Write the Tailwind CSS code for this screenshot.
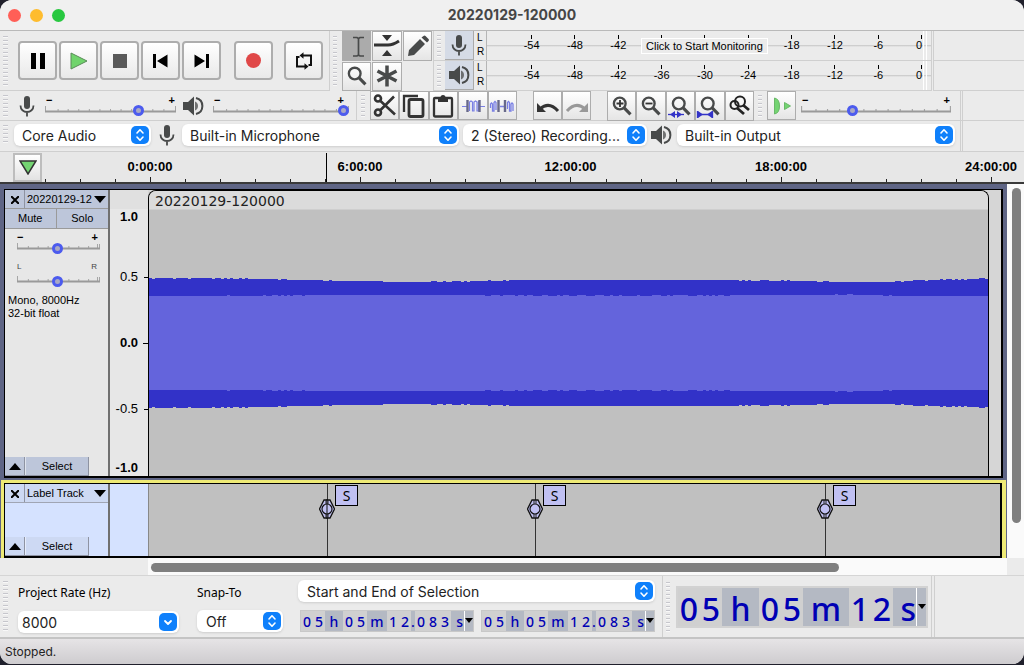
<!DOCTYPE html>
<html lang="en">
<head>
<meta charset="utf-8">
<title>20220129-120000</title>
<script src="https://cdn.jsdelivr.net/npm/@tailwindcss/browser@4"></script>
</head>
<body class="bg-[#20202c] font-['Liberation_Sans',sans-serif] text-black">
<svg width="0" height="0" class="absolute" aria-hidden="true">
  <defs>
    <symbol id="mic" viewBox="0 0 16 22"><rect x="5" y="1" width="6" height="13" rx="3" fill="#484a4a"/><path d="M1.500 10.500c0 4 3 6.500 6.500 6.500s6.500-2.500 6.500-6.500M8 17v4.500" fill="none" stroke="#484a4a" stroke-width="1.800"/></symbol>
    <symbol id="speaker" viewBox="0 0 21 20"><path d="M0 6h5l6-5.500v19L5 14H0z" fill="#484a4a"/><path d="M12 5.500c4 1 4 8 0 9z" fill="#484a4a" opacity=".75"/><path d="M13 2c8.500 2 8.500 14 0 16" fill="none" stroke="#484a4a" stroke-width="2"/></symbol>
    <symbol id="updown" viewBox="0 0 18 18"><rect width="18" height="18" rx="5" fill="#0f80fb"/><path d="M6 7l3-3.200L12 7M6 11l3 3.200L12 11" fill="none" stroke="#fff" stroke-width="1.600" stroke-linecap="round" stroke-linejoin="round"/></symbol>
    <symbol id="down" viewBox="0 0 18 18"><rect width="18" height="18" rx="5" fill="#0f80fb"/><path d="M6 8l3 3 3-3" fill="none" stroke="#fff" stroke-width="1.800" stroke-linecap="round" stroke-linejoin="round"/></symbol>
    <symbol id="lens" viewBox="0 0 28 28"><circle cx="12" cy="11.500" r="6" fill="none" stroke="#484a4a" stroke-width="2.400"/><path d="M16.500 16l6.500 6.500" stroke="#484a4a" stroke-width="3.200"/></symbol>
    <symbol id="scale" viewBox="0 0 130 8" preserveAspectRatio="none"><path d="M.5 7V1M13 7V4M23 7V4M33.500 7V4M44 7V4M54.500 7V4M65 7V4M75.500 7V4M86 7V4M96.500 7V4M107 7V4M118 7V4M129.500 7V1" stroke="#a4a4a4" fill="none"/><path d="M0 6.500h130" stroke="#9a9a9a" stroke-width="2"/></symbol>
    <symbol id="scaleShort" viewBox="0 0 84 8" preserveAspectRatio="none"><path d="M.5 7V1M11.500 7V4M21.500 7V4M31.500 7V4M41.500 7V4M52.500 7V4M62.500 7V4M72.500 7V4M81.500 7V2M83.500 7V2" stroke="#a4a4a4" fill="none"/><path d="M0 6.500h84" stroke="#9a9a9a" stroke-width="2"/></symbol>
    <symbol id="handle" viewBox="0 0 16 20"><path d="M5 1h6l4.500 9L11 19H5L.5 10z" fill="#c0c0f2" stroke="#111" stroke-width="1.300"/><path d="M7 1v4M9 1v4M7 15v4M9 15v4" stroke="#222"/><circle cx="8" cy="10" r="5" fill="#c0c0f2" stroke="#111" stroke-width="1.200"/></symbol>
  </defs>
</svg>

<main class="flex min-h-[664px] flex-col overflow-hidden rounded-xl bg-[#ebebeb]">
  <header class="grid h-[31px] grid-cols-[1fr_auto_1fr] items-center border-b border-[#b9b9b9] bg-[#f0f0f0] px-2">
    <div class="flex gap-[9px]">
      <button aria-label="Close" class="size-[13px] rounded-full bg-[#ff5f57]"></button>
      <button aria-label="Minimise" class="size-[13px] rounded-full bg-[#febc2e]"></button>
      <button aria-label="Zoom window" class="size-[13px] rounded-full bg-[#28c840]"></button>
    </div>
    <h1 class="pb-[2px] font-['Inter',sans-serif] text-[14px] font-bold text-[#464646]">20220129-120000</h1>
  </header>

  <!-- Transport, tools and meters -->
  <div class="flex h-[60px] shrink-0">
    <section aria-label="Transport" class="flex w-[330px] shrink-0 items-center border-r border-b border-[#cfcfcf]">
      <span class="mr-[10px] ml-[3px] h-[50px] w-[5px] bg-[repeating-linear-gradient(#c6c6cc_0_1px,#f8f8f8_1px_2px,transparent_2px_4px)]"></span>
      <div class="flex gap-[2px]">
        <button aria-label="Pause" class="flex size-[39px] items-center justify-center rounded-sm border-2 border-[#adadad] bg-linear-to-b from-white to-[#e9e9e9]"><svg width="14" height="16"><path d="M0 0h5v16H0zM9 0h5v16H9z"/></svg></button>
        <button aria-label="Play" class="flex size-[39px] items-center justify-center rounded-sm border-2 border-[#adadad] bg-linear-to-b from-white to-[#e9e9e9]"><svg width="18" height="18"><path d="M1 1v16l16-8z" fill="#70d46c" stroke="#5a8a58"/></svg></button>
        <button aria-label="Stop" class="flex size-[39px] items-center justify-center rounded-sm border-2 border-[#adadad] bg-linear-to-b from-white to-[#e9e9e9]"><svg width="14" height="14"><path d="M0 0h14v14H0z" fill="#5a5a5a"/></svg></button>
        <button aria-label="Skip to start" class="flex size-[39px] items-center justify-center rounded-sm border-2 border-[#adadad] bg-linear-to-b from-white to-[#e9e9e9]"><svg width="15" height="14"><path d="M0 0h3v14H0zM14.500 .5v13L4 7z"/></svg></button>
        <button aria-label="Skip to end" class="flex size-[39px] items-center justify-center rounded-sm border-2 border-[#adadad] bg-linear-to-b from-white to-[#e9e9e9]"><svg width="15" height="14"><path d="M12 0h3v14h-3zM.5 .5v13L11 7z"/></svg></button>
      </div>
      <button aria-label="Record" class="ml-[13px] flex size-[39px] items-center justify-center rounded-sm border-2 border-[#adadad] bg-linear-to-b from-white to-[#e9e9e9]"><span class="size-[15px] rounded-full bg-[#e04848]"></span></button>
      <button aria-label="Loop" class="ml-[11px] flex size-[39px] items-center justify-center rounded-sm border-2 border-[#adadad] bg-linear-to-b from-white to-[#e9e9e9]"><svg width="18" height="18" fill="none" stroke="#111" stroke-width="2"><path d="M4.500 5H2v9.500h8M13.500 13H16V3.500H8"/><path d="M8.500 .2v6.600L4.500 3.500zM9.500 11.200v6.600l4-3.300z" fill="#111" stroke="none"/></svg></button>
    </section>
    <section aria-label="Tools" class="flex w-[103px] shrink-0 pr-px">
      <span class="mt-[5px] mr-[5px] ml-[3px] h-[50px] w-[4px] bg-[repeating-linear-gradient(#c6c6cc_0_1px,#f8f8f8_1px_2px,transparent_2px_4px)]"></span>
      <div class="grid flex-1 grid-cols-3 grid-rows-2 gap-px">
        <button aria-label="Selection tool" class="flex items-center justify-center bg-[#ababab]"><svg width="28" height="28" fill="none" stroke="#484a4a" stroke-width="2"><path d="M15.500 6v18M10 5.500h4l1.500 1 1.500-1h4M10 24h4l1.500-1 1.500 1h4" stroke-width="1.700"/></svg></button>
        <button aria-label="Envelope tool" class="flex items-center justify-center border border-[#adadad] bg-linear-to-b from-white to-[#e5e5e5]"><svg width="28" height="28"><path d="M9 3h10l-5 6zM9 24h10l-5-6z" fill="#333"/><path d="M1 13h14q5 0 11-4" fill="none" stroke="#333" stroke-width="3"/></svg></button>
        <button aria-label="Draw tool" class="flex items-center justify-center border border-[#adadad] bg-linear-to-b from-white to-[#e5e5e5]"><svg width="28" height="28" fill="#484a4a"><path d="M4 24l1-6L16 7l5 5-11 11zM17.500 5.500l2-1.500q1-1 2 0l3 3q1 1 0 2L23 10.500z"/></svg></button>
        <button aria-label="Zoom tool" class="flex items-center justify-center border border-[#adadad] bg-linear-to-b from-white to-[#e5e5e5]"><svg width="28" height="28"><use href="#lens"/></svg></button>
        <button aria-label="Multi-tool" class="flex items-center justify-center border border-[#adadad] bg-linear-to-b from-white to-[#e5e5e5]"><svg width="28" height="28"><path d="M14 3.500v21M4.500 9l19 10M23.500 9l-19 10" stroke="#484a4a" stroke-width="3.500"/></svg></button>
      </div>
    </section>
    <section aria-label="Meters" class="flex w-[499px] shrink-0 flex-col border-r border-l border-[#cfcfcf]">
      <div class="flex h-[30px] border-b border-[#cfcfcf]">
        <span class="mt-[4px] mr-[4px] ml-[3px] h-[24px] w-[4px] bg-[repeating-linear-gradient(#c6c6cc_0_1px,#f8f8f8_1px_2px,transparent_2px_4px)]"></span>
        <button aria-label="Record meter" class="flex w-[29px] items-center justify-center border-r border-b border-[#aaa] bg-[#d5dbe6]"><svg width="16" height="22"><use href="#mic"/></svg></button>
        <div class="w-[12px] pl-[3px] text-[10px] leading-[14px]"><p>L</p><p>R</p></div>
        <div class="relative flex-1 border-l border-[#b5b5b5] bg-linear-to-b from-transparent from-[14px] via-[#c4c4c4] via-[14px] to-transparent to-[16px]">
          <div class="flex pt-[4px] pr-[31px] pl-[23px] text-[11px] leading-[12px]">
            <span class="flex flex-1 flex-col items-center"><i class="h-[4px] w-px bg-black"></i>-54</span><span class="flex flex-1 flex-col items-center"><i class="h-[4px] w-px bg-black"></i>-48</span><span class="flex flex-1 flex-col items-center"><i class="h-[4px] w-px bg-black"></i>-42</span><span class="flex flex-1 flex-col items-center"><i class="h-[4px] w-px bg-black"></i>&nbsp;</span><span class="flex flex-1 flex-col items-center"><i class="h-[4px] w-px bg-black"></i>&nbsp;</span><span class="flex flex-1 flex-col items-center"><i class="h-[4px] w-px bg-black"></i>&nbsp;</span><span class="flex flex-1 flex-col items-center"><i class="h-[4px] w-px bg-black"></i>-18</span><span class="flex flex-1 flex-col items-center"><i class="h-[4px] w-px bg-black"></i>-12</span><span class="flex flex-1 flex-col items-center"><i class="h-[4px] w-px bg-black"></i>-6</span>
          </div>
          <span class="absolute top-[4px] right-[9px] flex flex-col items-end text-[11px] leading-[12px]"><i class="h-[4px] w-px bg-black"></i>0</span>
          <button class="absolute top-[7px] left-[154px] h-[16px] border border-white bg-[#ebebeb] px-[4px] text-[11px] leading-[13px] whitespace-nowrap">Click to Start Monitoring</button>
          <i class="absolute top-0 right-[4px] h-[29px] w-[4px] border-x border-white"></i>
        </div>
      </div>
      <div class="flex h-[30px] border-b border-[#cfcfcf]">
        <span class="mt-[4px] mr-[4px] ml-[3px] h-[24px] w-[4px] bg-[repeating-linear-gradient(#c6c6cc_0_1px,#f8f8f8_1px_2px,transparent_2px_4px)]"></span>
        <button aria-label="Playback meter" class="flex w-[29px] items-center justify-center border-r border-b border-[#aaa] bg-[#d5dbe6]"><svg width="21" height="20"><use href="#speaker"/></svg></button>
        <div class="w-[12px] pl-[3px] text-[10px] leading-[14px]"><p>L</p><p>R</p></div>
        <div class="relative flex-1 border-l border-[#b5b5b5] bg-linear-to-b from-transparent from-[14px] via-[#c4c4c4] via-[14px] to-transparent to-[16px]">
          <div class="flex pt-[4px] pr-[31px] pl-[23px] text-[11px] leading-[12px]">
            <span class="flex flex-1 flex-col items-center"><i class="h-[4px] w-px bg-black"></i>-54</span><span class="flex flex-1 flex-col items-center"><i class="h-[4px] w-px bg-black"></i>-48</span><span class="flex flex-1 flex-col items-center"><i class="h-[4px] w-px bg-black"></i>-42</span><span class="flex flex-1 flex-col items-center"><i class="h-[4px] w-px bg-black"></i>-36</span><span class="flex flex-1 flex-col items-center"><i class="h-[4px] w-px bg-black"></i>-30</span><span class="flex flex-1 flex-col items-center"><i class="h-[4px] w-px bg-black"></i>-24</span><span class="flex flex-1 flex-col items-center"><i class="h-[4px] w-px bg-black"></i>-18</span><span class="flex flex-1 flex-col items-center"><i class="h-[4px] w-px bg-black"></i>-12</span><span class="flex flex-1 flex-col items-center"><i class="h-[4px] w-px bg-black"></i>-6</span>
          </div>
          <span class="absolute top-[4px] right-[9px] flex flex-col items-end text-[11px] leading-[12px]"><i class="h-[4px] w-px bg-black"></i>0</span>
          <i class="absolute top-0 right-[4px] h-[29px] w-[4px] border-x border-white"></i>
        </div>
      </div>
    </section>
    <div class="ml-px flex-1 border-b border-l border-[#cfcfcf]"><div class="h-[30px] border-b border-[#cfcfcf]"></div></div>
  </div>

  <!-- Mixer, edit and play-at-speed -->
  <div class="flex h-[30px] shrink-0 border-b border-[#cfcfcf]">
    <section aria-label="Mixer" class="flex w-[357px] shrink-0 items-center border-r border-[#cfcfcf]">
      <span class="mr-[11px] ml-[3px] h-[22px] w-[5px] bg-[repeating-linear-gradient(#c6c6cc_0_1px,#f8f8f8_1px_2px,transparent_2px_4px)]"></span>
      <svg width="16" height="22"><use href="#mic"/></svg>
      <div class="ml-[10px] grid w-[131px] grid-rows-[10px_12px]">
        <div class="flex justify-between px-[1px] text-[11px] leading-[10px] font-bold"><span>−</span><span>+</span></div>
        <svg class="[grid-area:2/1] h-[8px] w-full" preserveAspectRatio="none"><use href="#scale"/></svg>
        <input type="range" aria-label="Recording volume" value="73" class="[grid-area:2/1] h-[12px] w-full appearance-none bg-transparent [&::-webkit-slider-thumb]:size-[11px] [&::-webkit-slider-thumb]:appearance-none [&::-webkit-slider-thumb]:rounded-full [&::-webkit-slider-thumb]:border-[3px] [&::-webkit-slider-thumb]:border-[#4c5bee] [&::-webkit-slider-thumb]:bg-[#a9a9c4]">
      </div>
      <svg class="ml-[7px]" width="21" height="20"><use href="#speaker"/></svg>
      <div class="ml-[9px] grid w-[136px] grid-rows-[10px_12px]">
        <div class="flex justify-between px-[1px] pr-[5px] text-[11px] leading-[10px] font-bold"><span>−</span><span>+</span></div>
        <svg class="[grid-area:2/1] h-[8px] w-full" preserveAspectRatio="none"><use href="#scale"/></svg>
        <input type="range" aria-label="Playback volume" value="100" class="[grid-area:2/1] h-[12px] w-full appearance-none bg-transparent [&::-webkit-slider-thumb]:size-[11px] [&::-webkit-slider-thumb]:appearance-none [&::-webkit-slider-thumb]:rounded-full [&::-webkit-slider-thumb]:border-[3px] [&::-webkit-slider-thumb]:border-[#4c5bee] [&::-webkit-slider-thumb]:bg-[#a9a9c4]">
      </div>
    </section>
    <section aria-label="Edit" class="flex w-[397px] shrink-0 items-center">
      <span class="mr-[5px] ml-[4px] h-[22px] w-[4px] bg-[repeating-linear-gradient(#c6c6cc_0_1px,#f8f8f8_1px_2px,transparent_2px_4px)]"></span>
      <div class="grid h-[29px] w-[147px] grid-cols-5">
        <button aria-label="Cut" class="flex items-center justify-center border border-[#adadad] bg-linear-to-b from-white to-[#e5e5e5]"><svg width="26" height="26" fill="none" stroke="#333" stroke-width="2.600"><circle cx="6" cy="5.500" r="3"/><circle cx="6" cy="19.500" r="3"/><path d="M8.500 8L23 21.500M8.500 17L22 3.500"/></svg></button>
        <button aria-label="Copy" class="flex items-center justify-center border border-[#adadad] bg-linear-to-b from-white to-[#e5e5e5]"><svg width="26" height="26" fill="none" stroke="#333" stroke-width="2.300"><path d="M3 19V3h14"/><rect x="8" y="6.500" width="14" height="17" rx="1.500" stroke-width="2.800"/></svg></button>
        <button aria-label="Paste" class="flex items-center justify-center border border-[#adadad] bg-linear-to-b from-white to-[#e5e5e5]"><svg width="26" height="26"><rect x="4" y="5" width="18" height="18.500" rx="1" fill="none" stroke="#333" stroke-width="2.300"/><path d="M8 9V4.500h2.500a2.500 2.500 0 015 0H18V9z" fill="#333"/></svg></button>
        <button aria-label="Trim audio" class="flex items-center justify-center border border-[#adadad] bg-linear-to-b from-white to-[#e5e5e5]"><svg width="26" height="26" fill="none"><path d="M2 13.500h5M20 13.500h5M9.500 18V9l1.500-1 1.500 1v9h1.500V9l1.500-1L17 9v9h1.500V8" stroke="#7a80e4" stroke-width="1.200"/><path d="M7.500 7v12M19.500 7v12" stroke="#68698a" stroke-width="2.400"/></svg></button>
        <button aria-label="Silence audio" class="flex items-center justify-center border border-[#adadad] bg-linear-to-b from-white to-[#e5e5e5]"><svg width="26" height="26" fill="none"><path d="M1.500 15v-4l1-1 1 1v7H5V9.500L6 8.500l1 1V17M11 13.500h5M18.500 16V9.500l1-1 1 1V18H22v-7l1-1 1 1v7" stroke="#7a80e4" stroke-width="1.300"/><path d="M9.500 7v12M16 7v12" stroke="#68698a" stroke-width="2.400"/></svg></button>
      </div>
      <div class="ml-[16px] grid h-[29px] w-[58px] grid-cols-2">
        <button aria-label="Undo" class="flex items-center justify-center border border-[#adadad] bg-linear-to-b from-white to-[#e5e5e5]"><svg width="26" height="26"><path d="M2 10v9h9z" fill="#333"/><path d="M5 16q9-8 18 2" fill="none" stroke="#333" stroke-width="3"/></svg></button>
        <button aria-label="Redo" class="flex items-center justify-center border border-[#adadad] bg-linear-to-b from-white to-[#e5e5e5]"><svg width="26" height="26"><path d="M24 10v9h-9z" fill="#999"/><path d="M21 16q-9-8-18 2" fill="none" stroke="#999" stroke-width="3"/></svg></button>
      </div>
      <div class="ml-[16px] grid h-[29px] w-[147px] grid-cols-5">
        <button aria-label="Zoom in" class="flex items-center justify-center border border-[#adadad] bg-linear-to-b from-white to-[#e5e5e5]"><svg width="28" height="28"><use href="#lens"/><path d="M8.500 11.500h7M12 8v7" stroke="#333" stroke-width="1.800"/></svg></button>
        <button aria-label="Zoom out" class="flex items-center justify-center border border-[#adadad] bg-linear-to-b from-white to-[#e5e5e5]"><svg width="28" height="28"><use href="#lens"/><path d="M8.500 11.500h7" stroke="#333" stroke-width="1.800"/></svg></button>
        <button aria-label="Fit selection" class="flex items-center justify-center border border-[#adadad] bg-linear-to-b from-white to-[#e5e5e5]"><svg width="28" height="28"><use href="#lens"/><path d="M1 22.500h16" stroke="#3333c8" stroke-width="1.300"/><path d="M8 19v7l-5-3.500zM10 19v7l5-3.500z" fill="#3333c8"/></svg></button>
        <button aria-label="Fit project" class="flex items-center justify-center border border-[#adadad] bg-linear-to-b from-white to-[#e5e5e5]"><svg width="28" height="28"><use href="#lens"/><path d="M1.500 22.500h15M1.500 19v7M16.500 19v7" stroke="#3333c8" stroke-width="1.300"/><path d="M2 19v7l5-3.500zM16 19v7l-5-3.500z" fill="#3333c8"/></svg></button>
        <button aria-label="Zoom toggle" class="flex items-center justify-center border border-[#adadad] bg-linear-to-b from-white to-[#e5e5e5]"><svg width="28" height="28" fill="none" stroke="#222" stroke-width="2"><circle cx="8.500" cy="13" r="4"/><circle cx="14" cy="9.500" r="5"/><path d="M11 16l7 6M17 13l6 5" stroke-width="2.800"/></svg></button>
      </div>
    </section>
    <section aria-label="Play at speed" class="flex w-[207px] shrink-0 items-center border-r border-[#cfcfcf]">
      <span class="mr-[5px] ml-[4px] h-[22px] w-[4px] bg-[repeating-linear-gradient(#c6c6cc_0_1px,#f8f8f8_1px_2px,transparent_2px_4px)]"></span>
      <button aria-label="Play at speed" class="flex size-[29px] items-center justify-center border border-[#adadad] bg-linear-to-b from-white to-[#e5e5e5]"><svg width="26" height="26" fill="#74d472" stroke="#6ab868"><path d="M5.500 5v16q5-1 5-8t-5-8zM15.500 9.500v7l6-3.500z"/></svg></button>
      <div class="ml-[5px] grid w-[150px] grid-rows-[10px_12px]">
        <div class="flex justify-between px-[1px] text-[11px] leading-[10px] font-bold"><span>−</span><span>+</span></div>
        <svg class="[grid-area:2/1] h-[8px] w-full" preserveAspectRatio="none"><use href="#scale"/></svg>
        <input type="range" aria-label="Playback speed" value="33" class="[grid-area:2/1] h-[12px] w-full appearance-none bg-transparent [&::-webkit-slider-thumb]:size-[11px] [&::-webkit-slider-thumb]:appearance-none [&::-webkit-slider-thumb]:rounded-full [&::-webkit-slider-thumb]:border-[3px] [&::-webkit-slider-thumb]:border-[#4c5bee] [&::-webkit-slider-thumb]:bg-[#a9a9c4]">
      </div>
    </section>
    <div class="ml-px flex-1 border-l border-[#cfcfcf]"></div>
  </div>

  <!-- Devices -->
  <div class="flex h-[31px] shrink-0 border-b border-[#cfcfcf] font-['Inter',sans-serif] text-[14px] text-[#222]">
    <section aria-label="Device" class="flex w-[961px] shrink-0 items-center border-r border-[#cfcfcf] pb-[2px]">
      <span class="mr-[6px] ml-[3px] h-[20px] w-[5px] bg-[repeating-linear-gradient(#c6c6cc_0_1px,#f8f8f8_1px_2px,transparent_2px_4px)]"></span>
      <div class="relative w-[137px]"><select aria-label="Audio host" class="h-[22px] w-full appearance-none rounded-md bg-white pl-[8px] shadow-sm"><option>Core Audio</option></select><svg class="pointer-events-none absolute top-[2px] right-[2px]" width="18" height="18"><use href="#updown"/></svg></div>
      <svg class="mr-[7px] ml-[8px]" width="16" height="22"><use href="#mic"/></svg>
      <div class="relative w-[277px]"><select aria-label="Recording device" class="h-[22px] w-full appearance-none rounded-md bg-white pl-[8px] shadow-sm"><option>Built-in Microphone</option></select><svg class="pointer-events-none absolute top-[2px] right-[2px]" width="18" height="18"><use href="#updown"/></svg></div>
      <div class="relative ml-[4px] w-[184px]"><select aria-label="Recording channels" class="h-[22px] w-full appearance-none rounded-md bg-white pl-[8px] shadow-sm"><option>2 (Stereo) Recording...</option></select><svg class="pointer-events-none absolute top-[2px] right-[2px]" width="18" height="18"><use href="#updown"/></svg></div>
      <svg class="mr-[5px] ml-[4px]" width="21" height="20"><use href="#speaker"/></svg>
      <div class="relative w-[278px]"><select aria-label="Playback device" class="h-[22px] w-full appearance-none rounded-md bg-white pl-[8px] shadow-sm"><option>Built-in Output</option></select><svg class="pointer-events-none absolute top-[2px] right-[2px]" width="18" height="18"><use href="#updown"/></svg></div>
    </section>
    <div class="ml-px flex-1 border-l border-[#cfcfcf]"></div>
  </div>

  <!-- Timeline -->
  <div class="flex h-[32px] shrink-0 border-b-2 border-[#3a3a3a] bg-[#e7e7e7]">
    <div class="w-[45px] shrink-0 pt-px pl-[13px]"><button aria-label="Pinned play head" class="flex size-[29px] items-center justify-center border-2 border-[#bdbdbd] bg-linear-to-b from-white to-[#e2e2e2]"><svg width="18" height="15"><path d="M1 1h16L9 14z" fill="#74d472" stroke="#333" stroke-width="1.500"/></svg></button></div>
    <div class="grid min-w-0 flex-1 overflow-hidden">
      <div class="[grid-area:1/1] flex pt-[7px] text-[13px] leading-[16px] font-bold">
        <span class="w-[210px] shrink-0 text-center">0:00:00</span><span class="w-[210px] shrink-0 text-center">6:00:00</span><span class="w-[211px] shrink-0 text-center">12:00:00</span><span class="w-[210px] shrink-0 text-center">18:00:00</span><span class="w-[210px] shrink-0 text-center">24:00:00</span>
      </div>
      <svg class="[grid-area:1/1] w-full" height="30" stroke="#222"><path id="rulerTicks"/><path d="M281.500 1v29" stroke="#000"/></svg>
    </div>
  </div>

  <!-- Tracks -->
  <div class="flex shrink-0">
    <div class="min-w-0 flex-1 bg-[#5f6585]">
      <section aria-label="Audio track" class="mx-[4px] mt-[5px] flex h-[289px] border border-r-2 border-b-2 border-black bg-[#e7e7e7]">
        <div class="flex w-[105px] shrink-0 flex-col border-r-2 border-[#707070]">
          <div class="flex h-[19px] border-b border-[#9a9a9a] bg-[#bdc6da]">
            <button aria-label="Close track" class="flex w-[20px] items-center justify-center border-r border-[#8e93a2] pt-px"><svg width="8" height="8" stroke="#000" stroke-width="2"><path d="M0 0l8 8M8 0L0 8"/></svg></button>
            <button class="flex flex-1 items-center gap-[2px] pl-[2px] text-[11px] whitespace-nowrap">20220129-12<svg width="12" height="7"><path d="M0 0h12L6 7z"/></svg></button>
          </div>
          <div class="grid h-[20px] grid-cols-2 border-b border-[#9a9a9a] bg-[#bdc6da] text-[11px]"><button class="border-r border-[#9a9a9a]">Mute</button><button>Solo</button></div>
          <div class="mt-[4px] ml-[12px] grid w-[83px] grid-rows-[9px_12px]">
            <div class="flex justify-between pr-[2px] text-[11px] leading-[9px] font-bold"><span>−</span><span>+</span></div>
            <svg class="[grid-area:2/1] h-[8px] w-full"><use href="#scaleShort"/></svg>
            <input type="range" aria-label="Gain" value="48" class="[grid-area:2/1] h-[12px] w-full appearance-none bg-transparent [&::-webkit-slider-thumb]:size-[11px] [&::-webkit-slider-thumb]:appearance-none [&::-webkit-slider-thumb]:rounded-full [&::-webkit-slider-thumb]:border-[3px] [&::-webkit-slider-thumb]:border-[#4c5bee] [&::-webkit-slider-thumb]:bg-[#a9a9c4]">
          </div>
          <div class="mt-[8px] ml-[12px] grid w-[83px] grid-rows-[13px_12px]">
            <div class="flex justify-between pr-[3px] text-[8px] leading-[10px] text-[#444]"><span>L</span><span>R</span></div>
            <svg class="[grid-area:2/1] h-[8px] w-full"><use href="#scaleShort"/></svg>
            <input type="range" aria-label="Pan" value="48" class="[grid-area:2/1] h-[12px] w-full appearance-none bg-transparent [&::-webkit-slider-thumb]:size-[11px] [&::-webkit-slider-thumb]:appearance-none [&::-webkit-slider-thumb]:rounded-full [&::-webkit-slider-thumb]:border-[3px] [&::-webkit-slider-thumb]:border-[#4c5bee] [&::-webkit-slider-thumb]:bg-[#a9a9c4]">
          </div>
          <p class="mt-[7px] pl-[3px] text-[11px] leading-[13px]">Mono, 8000Hz<br>32-bit float</p>
          <div class="mt-auto flex h-[19px] w-[84px] border-r border-b border-[#8e93a2] bg-[#bdc6da] text-[11px]">
            <button aria-label="Collapse track" class="flex w-[20px] items-center justify-center border-r border-[#8e93a2]"><svg width="12" height="7"><path d="M0 7h12L6 0z"/></svg></button>
            <button class="flex-1 border-l border-[#dfe4ee]">Select</button>
          </div>
        </div>
        <div class="flex w-[38px] shrink-0 flex-col border-t-[19px] border-[#e0e0e0] text-right text-[13px] leading-[16px]">
          <b class="pr-[10px]">1.0</b>
          <span class="mt-[44px] flex items-center justify-end gap-[6px]">0.5<i class="h-px w-[4px] bg-black"></i></span>
          <span class="mt-[50px] flex items-center justify-end gap-[5px] font-bold">0.0<i class="h-px w-[5px] bg-black"></i></span>
          <span class="mt-[50px] flex items-center justify-end gap-[6px]">-0.5<i class="h-px w-[4px] bg-black"></i></span>
          <b class="mt-[43px] pr-[10px]">-1.0</b>
        </div>
        <div class="flex min-w-0 flex-1 bg-[#d6d6d6]">
          <div class="flex min-w-0 flex-1 flex-col overflow-hidden rounded-t-lg border border-b-0 border-black bg-[#c0c0c0]">
            <h2 class="h-[19px] border-b border-[#cecece] bg-[#dbdbdb] pl-[6px] font-['DejaVu_Sans',sans-serif] text-[14px] leading-[21px] text-[#222]">20220129-120000</h2>
            <svg class="w-full flex-1" viewBox="0 0 840 266" preserveAspectRatio="none" shape-rendering="crispEdges"><path id="waveOuter" fill="#3232c8"/><path id="waveInner" fill="#6464dc"/></svg>
          </div>
          <div class="w-[12px]"></div>
        </div>
      </section>
      <div class="mx-px mt-[2px] border-2 border-b-0 border-[#eeea76] bg-[#eeea76] pt-px pr-[2px]">
        <section aria-label="Label track" class="ml-px flex h-[75px] border border-r-2 border-b-2 border-black bg-[#c0c0c0]">
          <div class="flex w-[105px] shrink-0 flex-col border-r-2 border-[#707070] bg-[#d5e2ff]">
            <div class="flex h-[19px] border-b border-[#a0a5b4] bg-[#cdd9f3]">
              <button aria-label="Close label track" class="flex w-[20px] items-center justify-center border-r border-[#8e93a2] pt-px"><svg width="8" height="8" stroke="#000" stroke-width="2"><path d="M0 0l8 8M8 0L0 8"/></svg></button>
              <button class="flex flex-1 items-center justify-between pr-[2px] pl-[2px] text-[11px] whitespace-nowrap">Label Track<svg width="12" height="7"><path d="M0 0h12L6 7z"/></svg></button>
            </div>
            <div class="mt-auto flex h-[19px] w-[84px] border-r border-b border-[#8e93a2] bg-[#cdd9f3] text-[11px]">
              <button aria-label="Collapse label track" class="flex w-[20px] items-center justify-center border-r border-[#8e93a2]"><svg width="12" height="7"><path d="M0 7h12L6 0z"/></svg></button>
              <button class="flex-1 border-l border-[#e6edfc]">Select</button>
            </div>
          </div>
          <div class="w-[39px] shrink-0 border-r border-[#888] bg-[#d5e2ff]"></div>
          <div class="relative flex-1">
            <div class="absolute top-0 bottom-0 left-[170px] w-[34px]"><i class="absolute inset-y-0 left-[8px] w-px bg-[#333]"></i><svg class="absolute top-[15px] left-0" width="16" height="20"><use href="#handle"/><path d="M8 0v20" stroke="#111"/></svg><button class="absolute top-px left-[16px] h-[21px] w-[23px] border border-black bg-[#c0c0f2] font-['Noto_Sans',sans-serif] text-[14px] leading-[18px]">S</button></div>
            <div class="absolute top-0 bottom-0 left-[378px] w-[34px]"><i class="absolute inset-y-0 left-[8px] w-px bg-[#333]"></i><svg class="absolute top-[15px] left-0" width="16" height="20"><use href="#handle"/></svg><button class="absolute top-px left-[16px] h-[21px] w-[23px] border border-black bg-[#c0c0f2] font-['Noto_Sans',sans-serif] text-[14px] leading-[18px]">S</button></div>
            <div class="absolute top-0 bottom-0 left-[668px] w-[34px]"><i class="absolute inset-y-0 left-[8px] w-px bg-[#333]"></i><svg class="absolute top-[15px] left-0" width="16" height="20"><use href="#handle"/></svg><button class="absolute top-px left-[16px] h-[21px] w-[23px] border border-black bg-[#c0c0f2] font-['Noto_Sans',sans-serif] text-[14px] leading-[18px]">S</button></div>
          </div>
        </section>
      </div>
    </div>
    <div class="w-[17px] shrink-0 bg-[#fafafa] pt-[4px] pl-[5px]"><div class="h-[335px] w-[9px] rounded-full bg-[#7f7f7f]"></div></div>
  </div>
  <div class="flex h-[18px] shrink-0 border-b border-[#d5d5d5] pr-[17px] pl-[148px]"><div class="flex-1 bg-[#fafafa] pt-[5px] pl-[3px]"><div class="h-[9px] w-[688px] rounded-full bg-[#7f7f7f]"></div></div></div>

  <!-- Selection and time -->
  <div class="flex h-[62px] shrink-0 border-b border-[#c4c4c4]">
    <section aria-label="Selection" class="flex w-[663px] shrink-0 border-r border-[#cfcfcf] font-['Inter',sans-serif] text-[14px] text-[#222]">
      <span class="mt-[5px] mr-[10px] ml-[3px] h-[50px] w-[5px] bg-[repeating-linear-gradient(#c6c6cc_0_1px,#f8f8f8_1px_2px,transparent_2px_4px)]"></span>
      <div class="flex w-[161px] flex-col gap-[10px] pt-[8px]">
        <label for="rate" class="font-['Noto_Sans',sans-serif] text-[12px] leading-[17px] text-black">Project Rate (Hz)</label>
        <div class="relative"><input id="rate" value="8000" class="h-[22px] w-full rounded-md bg-white pl-[4px] shadow-sm"><svg class="pointer-events-none absolute top-[2px] right-[2px]" width="18" height="18"><use href="#down"/></svg></div>
      </div>
      <div class="ml-[18px] flex w-[86px] flex-col gap-[9px] pt-[8px]">
        <label for="snap" class="font-['Noto_Sans',sans-serif] text-[12px] leading-[17px] text-black">Snap-To</label>
        <div class="relative"><select id="snap" class="h-[22px] w-full appearance-none rounded-md bg-white pl-[9px] shadow-sm"><option>Off</option></select><svg class="pointer-events-none absolute top-[2px] right-[2px]" width="18" height="18"><use href="#updown"/></svg></div>
      </div>
      <div class="ml-[15px] flex w-[357px] flex-col gap-[8px] pt-[4px]">
        <div class="relative"><select aria-label="Selection mode" class="h-[22px] w-full appearance-none rounded-md bg-white pl-[9px] shadow-sm"><option>Start and End of Selection</option></select><svg class="pointer-events-none absolute top-[2px] right-[2px]" width="18" height="18"><use href="#updown"/></svg></div>
        <div class="flex justify-between pl-[2px] font-['Noto_Sans',sans-serif] text-[14px] leading-[21px] font-medium text-[#0000b4]">
          <div role="group" aria-label="Selection start" class="flex h-[22px] w-[174px] border border-[#c8c8c8] bg-[#b4b9c3] text-center">
            <span class="flex bg-[#d0d0d0]"><span class="w-[12px]">0</span><span class="w-[12px]">5</span></span><span class="w-[18px]">h</span><span class="flex bg-[#d0d0d0]"><span class="w-[12px]">0</span><span class="w-[12px]">5</span></span><span class="w-[20px]">m</span><span class="flex bg-[#d0d0d0]"><span class="w-[12px]">1</span><span class="w-[12px]">2</span></span><span class="w-[4px]">.</span><span class="flex bg-[#d0d0d0]"><span class="w-[12px]">0</span><span class="w-[12px]">8</span><span class="w-[12px]">3</span></span><span class="flex-1 pr-px text-right">s</span>
            <button aria-label="Start format" class="flex w-[9px] justify-center border-l border-white pt-[7px]"><svg width="8" height="5"><path d="M0 0h8L4 5z"/></svg></button>
          </div>
          <div role="group" aria-label="Selection end" class="flex h-[22px] w-[174px] border border-[#c8c8c8] bg-[#b4b9c3] text-center">
            <span class="flex bg-[#d0d0d0]"><span class="w-[12px]">0</span><span class="w-[12px]">5</span></span><span class="w-[18px]">h</span><span class="flex bg-[#d0d0d0]"><span class="w-[12px]">0</span><span class="w-[12px]">5</span></span><span class="w-[20px]">m</span><span class="flex bg-[#d0d0d0]"><span class="w-[12px]">1</span><span class="w-[12px]">2</span></span><span class="w-[4px]">.</span><span class="flex bg-[#d0d0d0]"><span class="w-[12px]">0</span><span class="w-[12px]">8</span><span class="w-[12px]">3</span></span><span class="flex-1 pr-px text-right">s</span>
            <button aria-label="End format" class="flex w-[9px] justify-center border-l border-white pt-[7px]"><svg width="8" height="5"><path d="M0 0h8L4 5z"/></svg></button>
          </div>
        </div>
      </div>
    </section>
    <section aria-label="Time" class="flex w-[269px] shrink-0 items-center border-r border-[#cfcfcf]">
      <span class="mr-[6px] ml-[3px] h-[50px] w-[4px] bg-[repeating-linear-gradient(#c6c6cc_0_1px,#f8f8f8_1px_2px,transparent_2px_4px)]"></span>
      <div role="group" aria-label="Audio position" class="flex h-[42px] w-[252px] border-2 border-[#d2d2d2] bg-[#b4b9c3] text-center font-['Noto_Sans',sans-serif] text-[32px] leading-[42px] font-medium text-[#0000b4]">
        <span class="flex bg-[#d0d0d0]"><span class="w-[22px]">0</span><span class="w-[22px]">5</span></span><span class="w-[37px]">h</span><span class="flex bg-[#d0d0d0]"><span class="w-[22px]">0</span><span class="w-[22px]">5</span></span><span class="w-[46px]">m</span><span class="flex bg-[#d0d0d0]"><span class="w-[22px]">1</span><span class="w-[22px]">2</span></span><span class="flex-1 text-right">s</span>
        <button aria-label="Time format" class="flex w-[10px] justify-center border-l border-white pt-[16px]"><svg width="8" height="5"><path d="M0 0h8L4 5z"/></svg></button>
      </div>
    </section>
    <div class="ml-[2px] flex-1 border-l border-[#cfcfcf]"></div>
  </div>
  <footer class="flex h-[25px] flex-1 border-t border-[#c4c4c4] bg-linear-to-b from-[#e6e4e6] to-[#cecccf] pl-[5px] font-['Inter',sans-serif] text-[12px] leading-[25px] text-[#222]">Stopped.</footer>
</main>

<script>
  // Hour ticks: one every 35px, a longer one every six hours.
  let ticks = '';
  for (let i = -3; i <= 24; i++) {
    const x = Math.round(105 + i * 35.04) + 0.5;
    ticks += `M${x} 30V${i % 6 === 0 ? 25 : 27}`;
  }
  document.getElementById('rulerTicks').setAttribute('d', ticks);

  // Peak and RMS envelopes, mirrored about the zero line.
  const peak = [[0,64.5],[50,65],[110,64],[180,62.5],[260,61],[330,62],[390,63],[460,63],[560,63],[640,62.5],[690,61],[740,61],[780,63],[840,64.5]];
  const rms = [[0,47],[120,47.5],[250,48],[380,47.5],[560,47.5],[700,48.5],[760,47],[840,47]];
  const at = (pts, x) => {
    let i = 1;
    while (pts[i][0] < x) i++;
    const [a, b] = [pts[i - 1], pts[i]];
    return a[1] + (b[1] - a[1]) * (x - a[0]) / (b[0] - a[0]);
  };
  const shape = (pts, jitter, seed) => {
    const top = [], bottom = [];
    for (let x = 0; x < 840; x += 3) {
      seed = (seed * 1103515245 + 12345) % 2147483648;
      const h = Math.round(at(pts, x) + (seed / 2147483648 - 0.5) * jitter);
      top.push(`${x} ${133 - h}L${x + 3} ${133 - h}`);
      bottom.unshift(`${x + 3} ${133 + h}L${x} ${133 + h}`);
    }
    return 'M' + top.concat(bottom).join('L') + 'Z';
  };
  document.getElementById('waveOuter').setAttribute('d', shape(peak, 0.9, 7));
  document.getElementById('waveInner').setAttribute('d', shape(rms, 0.4, 3));
</script>
</body>
</html>
